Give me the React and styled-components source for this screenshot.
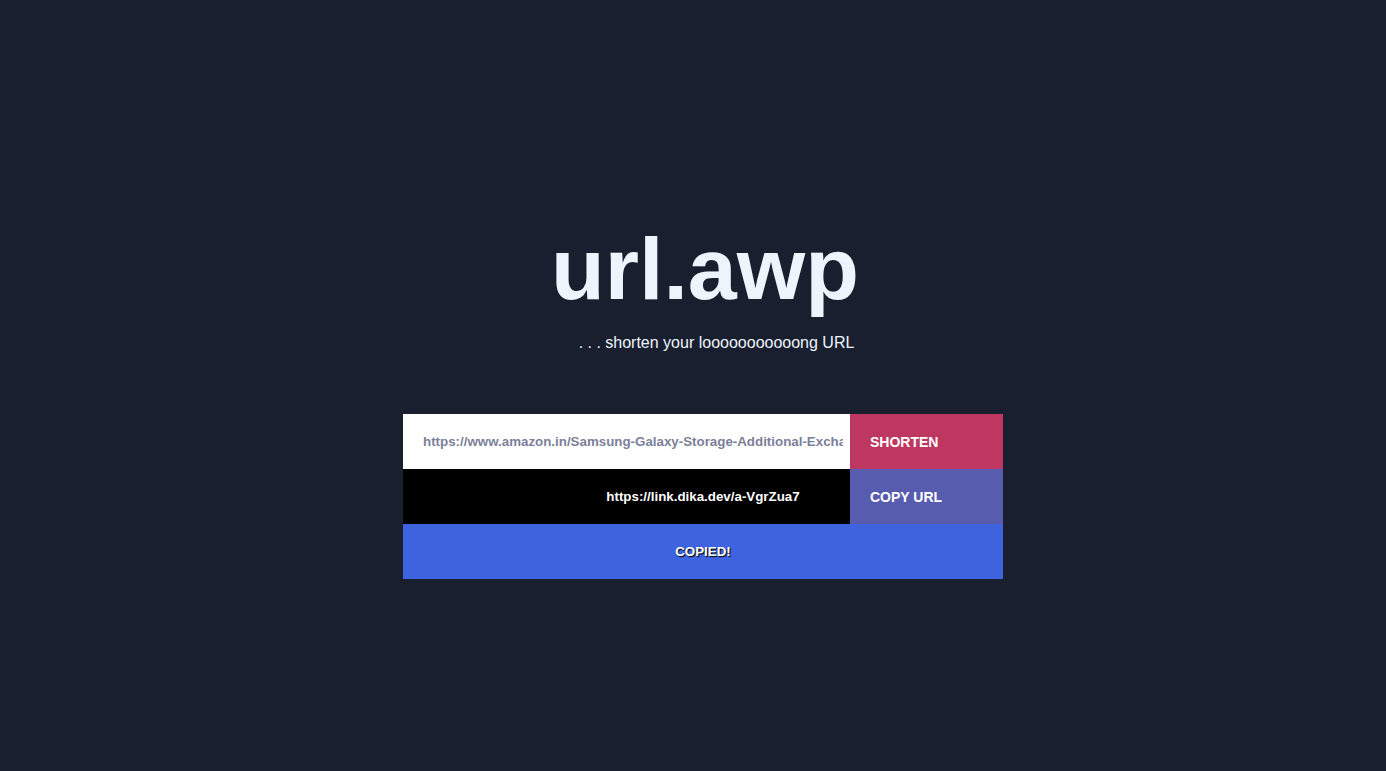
import React from "react";
import styled, { createGlobalStyle } from "styled-components";

const Global = createGlobalStyle`
  html, body { margin: 0; padding: 0; background: #191f2f; }
  body { font-family: "Liberation Sans", Arial, sans-serif; }
  * { box-sizing: border-box; }
`;

const Page = styled.main`
  min-height: 100vh;
  display: flex;
  flex-direction: column;
  align-items: center;
  justify-content: center;
  padding: 26px 0 0 20px;
  color: #eef4fc;
`;

const Title = styled.h1`
  margin: 0;
  font-size: 88px;
  font-weight: 700;
  line-height: 1.149;
  color: #eef4fc;
  padding-left: 4px;
`;

const Subtitle = styled.p`
  margin: 15px 0 0;
  font-size: 16px;
  line-height: 18.4px;
  color: #eef4fc;
  padding-left: 27px;
`;

const Panel = styled.section`
  margin-top: 62px;
  width: 600px;
  display: grid;
  grid-template-columns: 447px 153px;
  grid-auto-rows: 55px;
`;

const UrlInput = styled.input`
  border: none;
  outline: none;
  margin: 0;
  height: 55px;
  width: 100%;
  padding: 0 7px 0 20px;
  background: #ffffff;
  color: #7c7f9a;
  font-family: "Liberation Sans", Arial, sans-serif;
  font-size: 13.33px;
  font-weight: 700;
`;

const ActionButton = styled.button`
  border: none;
  margin: 0;
  height: 55px;
  padding: 0 20px;
  text-align: left;
  background: ${(p) => p.$bg};
  color: #ffffff;
  font-family: "Liberation Sans", Arial, sans-serif;
  font-size: 14px;
  font-weight: 700;
  cursor: pointer;
`;

const Result = styled.div`
  background: #000000;
  color: #ffffff;
  display: flex;
  align-items: center;
  justify-content: center;
  padding-left: 153px;
  font-size: 13.33px;
  font-weight: 700;
  white-space: nowrap;
`;

const Copied = styled.div`
  grid-column: 1 / -1;
  background: #3d64de;
  color: #ffffff;
  display: flex;
  align-items: center;
  justify-content: center;
  font-size: 13.33px;
  font-weight: 700;
  text-shadow: 1px 1px 1px #000;
`;

export default function App() {
  return (
    <>
      <Global />
      <Page>
        <Title>url.awp</Title>
        <Subtitle>. . . shorten your looooooooooong URL</Subtitle>
        <Panel>
          <UrlInput
            readOnly
            value="https://www.amazon.in/Samsung-Galaxy-Storage-Additional-Exchange/dp/B07HGJK535"
          />
          <ActionButton $bg="#bd3760">SHORTEN</ActionButton>
          <Result>https://link.dika.dev/a-VgrZua7</Result>
          <ActionButton $bg="#585caf">COPY URL</ActionButton>
          <Copied>COPIED!</Copied>
        </Panel>
      </Page>
    </>
  );
}
